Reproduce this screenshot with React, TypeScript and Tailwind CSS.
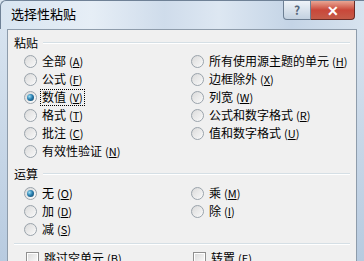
import React from 'react';

const font = { fontFamily: '"Noto Sans CJK SC", "Liberation Sans", sans-serif' };

const Key: React.FC<{ k: string }> = ({ k }) => (
    <span className="ml-[3px] text-[11px]">
        (<span className="underline">{k}</span>)
    </span>
);

const Radio: React.FC<{ label: string; k: string; checked?: boolean; focused?: boolean }> = ({ label, k, checked, focused }) => (
    <div className="flex h-[18px] items-center">
        <span className="flex size-[13px] items-center justify-center rounded-full border border-[#9aa3ab] bg-gradient-to-br from-[#d6d6d6] to-[#ffffff]">
            {checked ? (
                <span className="size-[7px] rounded-full bg-[radial-gradient(circle_at_35%_35%,#9fe0f5_0%,#2a7fb0_45%,#0e3c5c_100%)]" />
            ) : (
                <span className="size-[9px] rounded-full bg-gradient-to-br from-[#dedede] to-[#f6f6f6]" />
            )}
        </span>
        <span className={`ml-[4px] flex h-[15px] items-center px-[1px] leading-none ${focused ? 'outline-1 outline-dotted outline-black' : ''}`}>
            {label}
            <Key k={k} />
        </span>
    </div>
);

const Check: React.FC<{ label: string; k: string }> = ({ label, k }) => (
    <div className="flex h-[18px] items-center">
        <span className="flex size-[13px] items-center justify-center border border-[#8f8f8f] bg-white">
            <span className="size-[9px] bg-gradient-to-br from-[#dcdcdc] to-[#fbfbfb]" />
        </span>
        <span className="ml-[5px] flex items-center leading-none">
            {label}
            <Key k={k} />
        </span>
    </div>
);

const GroupLabel: React.FC<{ text: string }> = ({ text }) => (
    <div className="flex h-[16px] items-center pl-[6px] pr-[6px]">
        <span className="leading-none">{text}</span>
        <span className="ml-[5px] h-[2px] flex-1 border-t border-b border-t-[#d5dfe5] border-b-white" />
    </div>
);

export default function App() {
    return (
        <div
            className="relative h-[261px] w-[364px] overflow-hidden bg-gradient-to-b from-[#dbe6f1] via-[#c9d8e8] to-[#b8cbe0] text-[12px] text-black"
            style={font}
        >
            {/* Title bar */}
            <div className="flex h-[29px] items-start rounded-tl-[6px] border-l border-t border-[#6f8196] bg-[linear-gradient(90deg,#d9e5f1_0%,#e6eef6_25%,#cfdceb_45%,#dde7f2_60%,#c4d4e6_80%,#d7e3ef_100%)]">
                <span className="ml-[10px] mt-[6px] text-[13px] leading-none text-black">选择性粘贴</span>
                <div className="ml-auto mr-[9px] flex">
                    <button className="flex h-[19px] w-[28px] items-center justify-center rounded-bl-[4px] border border-t-0 border-[#6d7f93] bg-gradient-to-b from-[#eef3f8] to-[#c3d1e0] text-[12px] font-bold leading-none text-[#56677a]">
                        ?
                    </button>
                    <button className="flex h-[19px] w-[44px] items-center justify-center rounded-br-[4px] border border-l-0 border-t-0 border-[#6a2a25] bg-gradient-to-b from-[#e8a594] via-[#c9473a] to-[#c45b48] text-[14px] font-bold leading-none text-white">
                        ✕
                    </button>
                </div>
            </div>

            {/* Client area */}
            <div className="absolute bottom-0 left-[7px] right-[7px] top-[29px] border-l border-r border-t border-[#8e9cab] bg-[#f0f0f0] pt-[5px]">
                <GroupLabel text="粘贴" />
                <div className="mt-[1px] grid grid-cols-[167px_1fr] pl-[16px]">
                    <div className="flex flex-col">
                        <Radio label="全部" k="A" />
                        <Radio label="公式" k="F" />
                        <Radio label="数值" k="V" checked focused />
                        <Radio label="格式" k="T" />
                        <Radio label="批注" k="C" />
                        <Radio label="有效性验证" k="N" />
                    </div>
                    <div className="flex flex-col">
                        <Radio label="所有使用源主题的单元" k="H" />
                        <Radio label="边框除外" k="X" />
                        <Radio label="列宽" k="W" />
                        <Radio label="公式和数字格式" k="R" />
                        <Radio label="值和数字格式" k="U" />
                    </div>
                </div>

                <div className="mt-[6px]">
                    <GroupLabel text="运算" />
                </div>
                <div className="mt-[2px] grid grid-cols-[167px_1fr] pl-[16px]">
                    <div className="flex flex-col">
                        <Radio label="无" k="O" checked />
                        <Radio label="加" k="D" />
                        <Radio label="减" k="S" />
                    </div>
                    <div className="flex flex-col">
                        <Radio label="乘" k="M" />
                        <Radio label="除" k="I" />
                    </div>
                </div>

                <div className="mx-[6px] mt-[5px] h-[2px] border-t border-b border-t-[#d5dfe5] border-b-white" />

                <div className="mt-[4px] grid grid-cols-[167px_1fr] pl-[18px]">
                    <Check label="跳过空单元" k="B" />
                    <Check label="转置" k="E" />
                </div>
            </div>
        </div>
    );
}
